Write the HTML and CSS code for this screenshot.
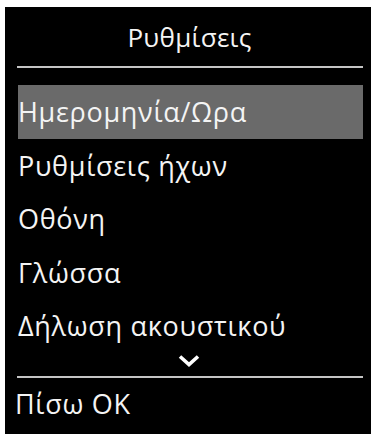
FILE: index.html
```html
<!DOCTYPE html>
<html lang="el">
<head>
<meta charset="utf-8">
<title>Ρυθμίσεις</title>
<link rel="stylesheet" href="styles.css">
</head>
<body>
<div class="screen">
  <div class="title">Ρυθμίσεις</div>
  <div class="rule"></div>
  <ul class="menu">
    <li class="item selected">Ημερομηνία/Ωρα</li>
    <li class="item">Ρυθμίσεις ήχων</li>
    <li class="item">Οθόνη</li>
    <li class="item">Γλώσσα</li>
    <li class="item">Δήλωση ακουστικού</li>
  </ul>
  <div class="more">
    <svg width="24" height="14" viewBox="0 0 24 14"><polyline points="3,2.5 12,10.5 21,2.5" fill="none" stroke="#ffffff" stroke-width="3.6"/></svg>
  </div>
  <div class="rule"></div>
  <div class="footer">Πίσω OK</div>
</div>
</body>
</html>
```
FILE: styles.css
```css
html, body {
  margin: 0;
  padding: 0;
  background: #ffffff;
}
.screen {
  box-sizing: border-box;
  width: 366px;
  height: 427px;
  margin: 7px 0 0 5px;
  background: #000000;
  color: #f4f4f4;
  font-family: "Open Sans", "Noto Sans", sans-serif;
  font-size: 27px;
  letter-spacing: 0.7px;
  display: flex;
  flex-direction: column;
}
.title {
  height: 59px;
  line-height: 60px;
  text-align: center;
  padding-left: 3px;
  font-size: 26px;
  letter-spacing: 0.3px;
}
.rule {
  height: 2px;
  margin: 0 8px 0 12px;
  background: #c4c4c4;
}
.menu {
  list-style: none;
  margin: 17px 8px 0 13px;
  padding: 0;
}
.item {
  height: 53.5px;
  line-height: 53px;
  padding-left: 0;
  white-space: nowrap;
}
.selected {
  background: #6a6a6a;
}
.more {
  display: flex;
  justify-content: center;
  height: 23px;
  padding-left: 2px;
}
.more svg {
  display: block;
  margin-top: 1px;
}
.footer {
  padding-left: 10px;
  line-height: 52px;
}
```
